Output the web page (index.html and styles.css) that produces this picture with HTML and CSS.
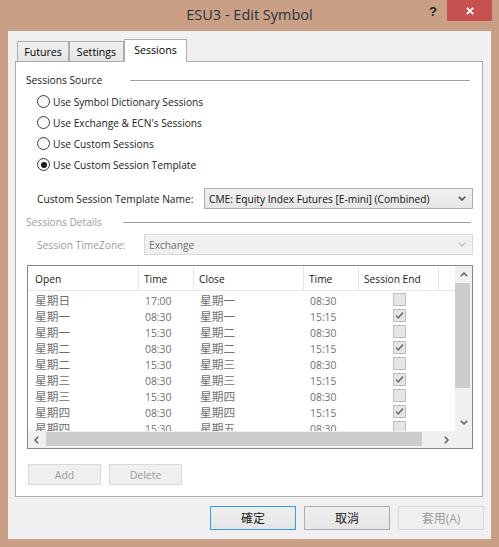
FILE: index.html
```html
<!DOCTYPE html>
<html>
<head>
<meta charset="utf-8">
<link rel="stylesheet" href="styles.css">
</head>
<body>
<div class="window">
  <div class="titlebar">
    <div class="title">ESU3 - Edit Symbol</div>
    <div class="controls">
      <div class="help">?</div>
      <div class="close"><svg width="8" height="8" viewBox="0 0 8 8"><path d="M0.8 0.8 L7.2 7.2 M7.2 0.8 L0.8 7.2" stroke="#fff" stroke-width="1.8" fill="none"/></svg></div>
    </div>
  </div>
  <div class="client">
    <div class="tabs">
      <div class="tab tab-futures">Futures</div>
      <div class="tab tab-settings">Settings</div>
      <div class="tab tab-sessions active">Sessions</div>
    </div>
    <div class="panel">
      <div class="group-head">
        <span>Sessions Source</span>
        <span class="line line-source"></span>
      </div>
      <div class="radios">
        <div class="radio"><span class="dot"></span><span>Use Symbol Dictionary Sessions</span></div>
        <div class="radio"><span class="dot"></span><span>Use Exchange &amp; ECN's Sessions</span></div>
        <div class="radio"><span class="dot"></span><span>Use Custom Sessions</span></div>
        <div class="radio"><span class="dot checked"><span class="pip"></span></span><span>Use Custom Session Template</span></div>
      </div>
      <div class="field-row template-row">
        <span class="field-label template-label">Custom Session Template Name:</span>
        <div class="select template-select">
          <span>CME: Equity Index Futures [E-mini] (Combined)</span>
          <svg class="chev" width="8" height="5" viewBox="0 0 8 5"><path d="M0.8 0.8 L4 4 L7.2 0.8" stroke="#444" stroke-width="1.5" fill="none"/></svg>
        </div>
      </div>
      <div class="group-head disabled details-head">
        <span>Sessions Details</span>
        <span class="line line-details"></span>
      </div>
      <div class="field-row tz-row">
        <span class="field-label tz-label disabled">Session TimeZone:</span>
        <div class="select tz-select">
          <span>Exchange</span>
          <svg class="chev" width="8" height="5" viewBox="0 0 8 5"><path d="M0.8 0.8 L4 4 L7.2 0.8" stroke="#c4c4c4" stroke-width="1.5" fill="none"/></svg>
        </div>
      </div>
      <div class="table">
        <div class="data">
          <div class="thead">
            <div class="th first">Open</div>
            <div class="th">Time</div>
            <div class="th">Close</div>
            <div class="th">Time</div>
            <div class="th">Session End</div>
            <div class="th last"></div>
          </div>
          <div class="tbody">
            <div class="tr"><span class="td first">星期日</span><span class="td num">17:00</span><span class="td">星期一</span><span class="td num">08:30</span><span class="td cbcell"><span class="cb"></span></span><span class="td"></span></div>
            <div class="tr"><span class="td first">星期一</span><span class="td num">08:30</span><span class="td">星期一</span><span class="td num">15:15</span><span class="td cbcell"><span class="cb"><svg width="11" height="11" viewBox="0 0 11 11"><path d="M2 5.5 L4.3 7.8 L9 2.6" stroke="#727272" stroke-width="1.6" fill="none"/></svg></span></span><span class="td"></span></div>
            <div class="tr"><span class="td first">星期一</span><span class="td num">15:30</span><span class="td">星期二</span><span class="td num">08:30</span><span class="td cbcell"><span class="cb"></span></span><span class="td"></span></div>
            <div class="tr"><span class="td first">星期二</span><span class="td num">08:30</span><span class="td">星期二</span><span class="td num">15:15</span><span class="td cbcell"><span class="cb"><svg width="11" height="11" viewBox="0 0 11 11"><path d="M2 5.5 L4.3 7.8 L9 2.6" stroke="#727272" stroke-width="1.6" fill="none"/></svg></span></span><span class="td"></span></div>
            <div class="tr"><span class="td first">星期二</span><span class="td num">15:30</span><span class="td">星期三</span><span class="td num">08:30</span><span class="td cbcell"><span class="cb"></span></span><span class="td"></span></div>
            <div class="tr"><span class="td first">星期三</span><span class="td num">08:30</span><span class="td">星期三</span><span class="td num">15:15</span><span class="td cbcell"><span class="cb"><svg width="11" height="11" viewBox="0 0 11 11"><path d="M2 5.5 L4.3 7.8 L9 2.6" stroke="#727272" stroke-width="1.6" fill="none"/></svg></span></span><span class="td"></span></div>
            <div class="tr"><span class="td first">星期三</span><span class="td num">15:30</span><span class="td">星期四</span><span class="td num">08:30</span><span class="td cbcell"><span class="cb"></span></span><span class="td"></span></div>
            <div class="tr"><span class="td first">星期四</span><span class="td num">08:30</span><span class="td">星期四</span><span class="td num">15:15</span><span class="td cbcell"><span class="cb"><svg width="11" height="11" viewBox="0 0 11 11"><path d="M2 5.5 L4.3 7.8 L9 2.6" stroke="#727272" stroke-width="1.6" fill="none"/></svg></span></span><span class="td"></span></div>
            <div class="tr"><span class="td first">星期四</span><span class="td num">15:30</span><span class="td">星期五</span><span class="td num">08:30</span><span class="td cbcell"><span class="cb"></span></span><span class="td"></span></div>
          </div>
        </div>
        <div class="vscroll">
          <div class="arrow"><svg width="8" height="5" viewBox="0 0 8 5"><path d="M0.8 4.2 L4 1 L7.2 4.2" stroke="#606060" stroke-width="1.5" fill="none"/></svg></div>
          <div class="vthumb"></div>
          <div class="spacer"></div>
          <div class="arrow"><svg width="8" height="5" viewBox="0 0 8 5"><path d="M0.8 0.8 L4 4 L7.2 0.8" stroke="#606060" stroke-width="1.5" fill="none"/></svg></div>
        </div>
        <div class="hscroll">
          <div class="arrow"><svg width="5" height="8" viewBox="0 0 5 8"><path d="M4.2 0.8 L1 4 L4.2 7.2" stroke="#606060" stroke-width="1.5" fill="none"/></svg></div>
          <div class="hthumb"></div>
          <div class="spacer"></div>
          <div class="arrow"><svg width="5" height="8" viewBox="0 0 5 8"><path d="M0.8 0.8 L4 4 L0.8 7.2" stroke="#606060" stroke-width="1.5" fill="none"/></svg></div>
        </div>
        <div class="corner"></div>
      </div>
      <div class="row-buttons">
        <div class="btn small disabled-btn">Add</div>
        <div class="btn small disabled-btn">Delete</div>
      </div>
    </div>
    <div class="dialog-buttons">
      <div class="btn big default">確定</div>
      <div class="btn big">取消</div>
      <div class="btn big disabled-btn">套用(A)</div>
    </div>
  </div>
</div>
</body>
</html>
```
FILE: styles.css
```css
* { box-sizing: border-box; }
html, body { margin: 0; padding: 0; }
body {
  width: 499px;
  height: 547px;
  overflow: hidden;
  font-family: "Open Sans", "Noto Sans CJK TC", sans-serif;
  font-size: 10.2px;
  color: #000;
}
.window {
  width: 499px;
  height: 547px;
  background: #c9a086;
  display: flex;
  flex-direction: column;
  padding: 0 8px 8px;
}
.titlebar {
  height: 31px;
  margin: 0 -8px;
  display: grid;
}
.titlebar > * { grid-area: 1 / 1; }
.title {
  justify-self: center;
  margin-top: 4px;
  line-height: 22px;
  font-size: 14.5px;
  color: #2b333b;
}
.controls {
  justify-self: end;
  display: flex;
  align-items: flex-start;
  padding-right: 7px;
}
.help {
  font-family: "Liberation Sans", sans-serif;
  font-weight: bold;
  font-size: 13px;
  line-height: 13px;
  color: #262626;
  margin: 5px 10px 0 0;
}
.close {
  width: 45px;
  height: 21px;
  background: #c75050;
  display: flex;
  align-items: center;
  justify-content: center;
}
.client {
  flex: 1;
  background: #f0f0f0;
  display: flex;
  flex-direction: column;
}
.tabs {
  height: 30px;
  display: flex;
  align-items: flex-end;
  padding-left: 9px;
}
.tab {
  height: 20px;
  border: 1px solid #acacac;
  border-bottom: none;
  background: linear-gradient(#f0f0f0, #e5e5e5);
  display: flex;
  align-items: center;
  justify-content: center;
  line-height: 1;
  padding-top: 1px;
  font-size: 10.6px;
}
.tab-futures { width: 52px; }
.tab-settings { width: 55px; }
.tab-sessions { width: 63px; }
.tab.active {
  height: 23px;
  margin-bottom: -1px;
  background: #fff;
  position: relative;
  z-index: 1;
  padding-top: 0;
  padding-bottom: 2px;
}
.panel {
  margin-left: 7px;
  width: 468px;
  height: 436px;
  border: 1px solid #acacac;
  background: #fff;
  display: flex;
  flex-direction: column;
}
.group-head {
  height: 16px;
  margin-top: 10px;
  padding-left: 10px;
  display: flex;
  align-items: center;
  color: #1a1a1a;
}
.line {
  height: 1px;
  background: #a0a0a0;
  margin-left: auto;
}
.line-source { width: 340px; margin-right: 12px; }
.line-details { width: 348px; margin-right: 11px; }
.disabled { color: #9c9c9c; }
.details-head { margin-top: 5px; }
.radios {
  margin-top: 3px;
  margin-left: 21px;
  display: flex;
  flex-direction: column;
}
.radio {
  height: 21px;
  display: flex;
  align-items: center;
  gap: 3px;
  color: #1a1a1a;
}
.dot {
  width: 13px;
  height: 13px;
  border-radius: 50%;
  border: 1px solid #3c3c3c;
  background: linear-gradient(#f4f4f4, #fff);
  display: flex;
  align-items: center;
  justify-content: center;
}
.pip {
  width: 6px;
  height: 6px;
  border-radius: 50%;
  background: #1a1a1a;
}
.field-row {
  height: 21px;
  margin-left: 21px;
  display: flex;
  align-items: center;
}
.template-row { margin-top: 13px; }
.tz-row { margin-top: 4px; }
.template-label { width: 167px; color: #1a1a1a; }
.tz-label { width: 107px; }
.select {
  height: 21px;
  display: flex;
  align-items: center;
  justify-content: space-between;
  padding: 0 6px 0 4px;
}
.template-select {
  width: 269px;
  border: 1px solid #acacac;
  background: linear-gradient(#f1f1f1, #e6e6e6);
  color: #111;
}
.tz-select {
  width: 329px;
  border: 1px solid #d9d9d9;
  background: #f0f0f0;
  color: #6d6d6d;
}
.table {
  margin-top: 10px;
  margin-left: 11px;
  width: 446px;
  height: 184px;
  border: 1px solid #828790;
  display: grid;
  grid-template-columns: 1fr 17px;
  grid-template-rows: 1fr 17px;
}
.data {
  overflow: hidden;
  display: flex;
  flex-direction: column;
}
.thead, .tr {
  display: grid;
  grid-template-columns: 111px 55px 110px 55px 80px 16px;
}
.thead {
  height: 25px;
  border-bottom: 1px solid #e3e8ef;
  flex-shrink: 0;
}
.th {
  border-right: 1px solid #e3e8ef;
  padding-left: 5px;
  display: flex;
  align-items: center;
  color: #1a1a1a;
  padding-top: 1px;
}
.th.first { padding-left: 7px; }
.th.last { border-right: none; }
.tr { height: 16px; flex-shrink: 0; }
.td {
  padding-left: 6px;
  display: flex;
  align-items: center;
  color: #707070;
  font-size: 11.7px;
  white-space: nowrap;
}
.td.first { padding-left: 7px; }
.td.num { font-size: 10.4px; padding-top: 3px; }
.td.cbcell { padding-left: 0; justify-content: center; }
.cb {
  width: 13px;
  height: 13px;
  border: 1px solid #bcbcbc;
  background: #e6e6e6;
  display: flex;
  align-items: center;
  justify-content: center;
}
.vscroll {
  background: #f0f0f0;
  display: flex;
  flex-direction: column;
}
.hscroll {
  background: #f0f0f0;
  display: flex;
}
.corner { background: #f0f0f0; }
.arrow {
  width: 17px;
  height: 17px;
  flex-shrink: 0;
  display: flex;
  align-items: center;
  justify-content: center;
}
.spacer { flex: 1; }
.vthumb {
  height: 105px;
  margin: 0 2px 0 0;
  background: #cdcdcd;
}
.hthumb {
  width: 376px;
  margin: 1px 0 2px 1px;
  background: #cdcdcd;
}
.row-buttons {
  margin-top: 15px;
  margin-left: 12px;
  display: flex;
  gap: 8px;
}
.btn {
  display: flex;
  align-items: center;
  justify-content: center;
  border: 1px solid #adadad;
  background: linear-gradient(#efefef, #e5e5e5);
  color: #1a1a1a;
}
.small { width: 73px; height: 21px; font-size: 10.5px; }
.big { width: 86px; height: 24px; font-size: 12px; }
.disabled-btn {
  border-color: #d9d9d9;
  background: #efefef;
  color: #9c9c9c;
}
.default { border-color: #3399ff; }
.dialog-buttons {
  margin-top: 9px;
  padding-right: 7px;
  display: flex;
  justify-content: flex-end;
  gap: 8px;
}
```
